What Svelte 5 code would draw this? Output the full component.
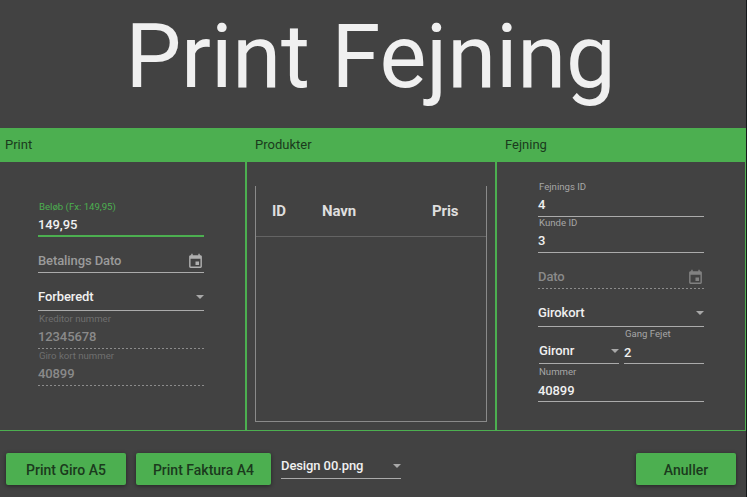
<script>
  const printFields = [
    { label: 'Beløb (Fx: 149,95)', value: '149,95', height: 75, state: 'active' },
    { value: 'Betalings Dato', height: 36, state: 'hint', icon: 'calendar' },
    { value: 'Forberedt', height: 38, icon: 'arrow', lift: 2 },
    { label: 'Kreditor nummer', value: '12345678', height: 38, state: 'disabled' },
    { label: 'Giro kort nummer', value: '40899', height: 37, state: 'disabled' }
  ];

  const sweepFields = [
    { label: 'Fejnings ID', value: '4', height: 55 },
    { label: 'Kunde ID', value: '3', height: 36 },
    { value: 'Dato', height: 36, state: 'disabled', icon: 'calendar' },
    { value: 'Girokort', height: 38, icon: 'arrow', lift: 2 },
    [
      { value: 'Gironr', height: 37, icon: 'arrow', lift: 1 },
      { label: 'Gang Fejet', value: '2', height: 37, drop: 1, labelLift: 1 }
    ],
    { label: 'Nummer', value: '40899', height: 38, drop: 1, labelLift: 1 }
  ];
</script>

{#snippet icon(name)}
  {#if name === 'calendar'}
    <svg class="calendar" viewBox="0 0 24 24" width="17" height="17">
      <path d="M19 19H5V8H19M16 1V3H8V1H6V3H5C3.9 3 3 3.9 3 5V19A2 2 0 0 0 5 21H19A2 2 0 0 0 21 19V5C21 3.9 20.1 3 19 3H18V1M17 12H12V17H17V12Z" />
    </svg>
  {:else if name === 'arrow'}
    <svg class="arrow" viewBox="0 0 8 4" width="8" height="4"><path d="M0 0H8L4 4Z" /></svg>
  {/if}
{/snippet}

{#snippet field(f)}
  <div class="field {f.state ?? ''}" style:height="{f.height}px">
    {#if f.label}<div class="label" style:margin-bottom="{3 + (f.labelLift ?? 0)}px">{f.label}</div>{/if}
    <div class="value" style:padding-bottom="{3 + (f.lift ?? 0) - (f.drop ?? 0)}px">
      <span>{f.value}</span>
      {@render icon(f.icon)}
    </div>
    <div class="rule"></div>
  </div>
{/snippet}

<main>
  <h1>Print Fejning</h1>
  <div class="panels">
    <section>
      <header>Print</header>
      <div class="fields">
        {#each printFields as f}{@render field(f)}{/each}
      </div>
    </section>
    <section>
      <header>Produkter</header>
      <div class="table">
        <div class="thead"><span>ID</span><span>Navn</span><span>Pris</span></div>
      </div>
    </section>
    <section>
      <header>Fejning</header>
      <div class="fields">
        {#each sweepFields as f}
          {#if Array.isArray(f)}
            <div class="pair">{#each f as part}{@render field(part)}{/each}</div>
          {:else}
            {@render field(f)}
          {/if}
        {/each}
      </div>
    </section>
  </div>
  <footer>
    <button class="giro">Print Giro A5</button>
    <button class="faktura">Print Faktura A4</button>
    <div class="design">{@render field({ value: 'Design 00.png', height: 26, icon: 'arrow', lift: 1 })}</div>
    <button class="cancel">Anuller</button>
  </footer>
</main>

<style>
  :global(body) { margin: 0; background: #424242; }
  main {
    box-sizing: border-box;
    width: 747px;
    height: 497px;
    display: flex;
    flex-direction: column;
    overflow: hidden;
    background: #424242;
    border-right: 1px solid #15181a;
    color: #f0f0f0;
    font: 500 13px/16px Roboto, sans-serif;
  }
  h1 {
    box-sizing: border-box;
    margin: 0;
    padding-right: 5px;
    height: 128px;
    flex: none;
    font-size: 88.5px;
    letter-spacing: -0.15px;
    font-weight: 400;
    line-height: 115px;
    text-align: center;
    white-space: nowrap;
    color: #f0f0f0;
  }
  .panels { display: flex; height: 303px; box-sizing: border-box; border-bottom: 1px solid #4caf50; }
  section { box-sizing: border-box; width: 250px; border-right: 2px solid #4caf50; }
  section:first-child { width: 247px; }
  section:last-child { width: 249px; border-right-width: 1px; }
  header {
    height: 34px;
    margin-right: -2px;
    padding-left: 8px;
    box-sizing: border-box;
    background: #4caf50;
    color: #1b3a1d;
    font-weight: 400;
    line-height: 33px;
  }
  section:first-child header { padding-left: 5px; }
  section:last-child header { margin-right: -1px; }
  .fields { width: 166px; margin-left: 38px; }
  section:last-child .fields { margin-left: 41px; }
  .field { display: flex; flex-direction: column; justify-content: flex-end; }
  .label { padding-left: 1px; font-size: 9.6px; font-weight: 400; line-height: 12px; color: #a6a6a6; margin-top: -4px; white-space: nowrap; }
  .value { display: flex; justify-content: space-between; align-items: center; height: 17px; white-space: nowrap; letter-spacing: -0.1px; }
  .rule { height: 1px; background: #ababab; flex: none; }
  .active .label { color: #4caf50; }
  .active .rule { height: 2px; margin-top: -1px; background: #4caf50; }
  .hint .value { color: #9b9b9b; }
  .hint .calendar { fill: #b0b0b0; }
  .disabled .label { color: #6f6f6f; }
  .disabled .value { color: #8a8a8a; }
  .disabled .calendar { fill: #818181; }
  .disabled .rule { background: repeating-linear-gradient(90deg, #8c8c8c 0 2px, #424242 2px 4px); }
  svg { flex: none; }
  .arrow { fill: #a8a8a8; }
  .calendar { margin-bottom: -2px; }
  .pair { display: flex; gap: 5px; margin-left: 1px; width: 165px; }
  .pair .field { width: 80px; }
  .table {
    box-sizing: border-box;
    width: 232px;
    height: 236px;
    margin: 24px 0 0 8px;
    border: 1px solid #8a8a8a;
    border-top: none;
  }
  .thead {
    display: flex;
    height: 51px;
    box-sizing: border-box;
    padding: 0 0 0 16px;
    border-bottom: 1px solid #646464;
    font-size: 15px;
    font-weight: 700;
    letter-spacing: -0.1px;
    line-height: 50px;
    color: #dedede;
  }
  .thead span:first-child { width: 50px; }
  .thead span:nth-child(2) { width: 110px; }
  footer { display: flex; padding: 22px 10px 0 6px; }
  button {
    height: 32px;
    padding: 0;
    border: none;
    border-radius: 2px;
    background: #4caf50;
    color: #1b3a1d;
    font: 500 14px/34px Roboto, sans-serif;
    box-shadow: 0 1px 4px rgba(0, 0, 0, 0.45);
  }
  .giro { width: 120px; }
  .faktura { width: 135px; margin-left: 10px; }
  .design { width: 120px; margin-left: 10px; }
  .cancel { width: 100px; margin-left: auto; }
</style>
